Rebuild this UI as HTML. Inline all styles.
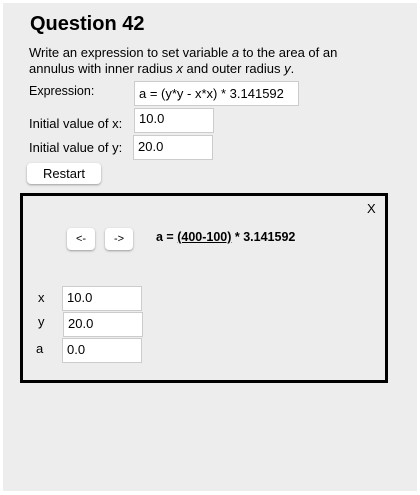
<!DOCTYPE html>
<html><head><style>
body{margin:0;width:420px;height:495px;background:#fff;font-family:"Liberation Sans",Arial,sans-serif;position:relative;overflow:hidden}
.bg{position:absolute;left:3px;top:3px;width:414px;height:488px;background:#ededed}
.a{position:absolute;white-space:nowrap;color:#000}
.in{position:absolute;background:#fff;border:1px solid #ccc;box-sizing:border-box;font-size:12.5px;padding-left:4px;line-height:22px}
.btn{position:absolute;background:#fff;border-radius:4px;box-shadow:0 1px 2px rgba(0,0,0,.35);box-sizing:border-box;text-align:center;font-size:12px}
</style></head><body>
<div class="bg"></div>
<div class="a" style="left:30px;top:13px;font-size:20px;font-weight:bold">Question 42</div>
<div class="a" style="left:29px;top:45px;font-size:13px;line-height:16px">Write an expression to set variable <i>a</i> to the area of an<br>annulus with inner radius <i>x</i> and outer radius <i>y</i>.</div>
<div class="a" style="left:29px;top:84px;font-size:12.5px">Expression:</div>
<div class="in" style="left:134px;top:81px;width:165px;height:25px;line-height:23px;font-size:13px">a = (y*y - x*x) * 3.141592</div>
<div class="a" style="left:29px;top:116px;font-size:13px">Initial value of x:</div>
<div class="in" style="left:134px;top:108px;width:80px;height:25px;line-height:20px;font-size:13px">10.0</div>
<div class="a" style="left:29px;top:140px;font-size:13px">Initial value of y:</div>
<div class="in" style="left:133px;top:135px;width:80px;height:25px;font-size:13px">20.0</div>
<div class="btn" style="left:27px;top:163px;width:74px;height:21px;line-height:21px;font-size:13px">Restart</div>
<div style="position:absolute;left:20px;top:193px;width:368px;height:190px;border:3px solid #000;box-sizing:border-box"></div>
<div class="a" style="left:367px;top:201px;font-size:13px">X</div>
<div class="btn" style="left:67px;top:228px;width:28px;height:22px;line-height:22px;font-size:11px">&lt;-</div>
<div class="btn" style="left:105px;top:228px;width:28px;height:22px;line-height:22px;font-size:11px">-&gt;</div>
<div class="a" style="left:156px;top:230px;font-size:12.5px;font-weight:bold">a = <u>(400-100)</u> * 3.141592</div>
<div class="a" style="left:38px;top:290px;font-size:13px">x</div>
<div class="in" style="left:62px;top:286px;width:80px;height:25px;font-size:13px">10.0</div>
<div class="a" style="left:38px;top:314px;font-size:13px">y</div>
<div class="in" style="left:63px;top:312px;width:80px;height:25px;font-size:13px">20.0</div>
<div class="a" style="left:36px;top:341px;font-size:13px">a</div>
<div class="in" style="left:62px;top:338px;width:80px;height:25px;font-size:13px">0.0</div>
</body></html>
